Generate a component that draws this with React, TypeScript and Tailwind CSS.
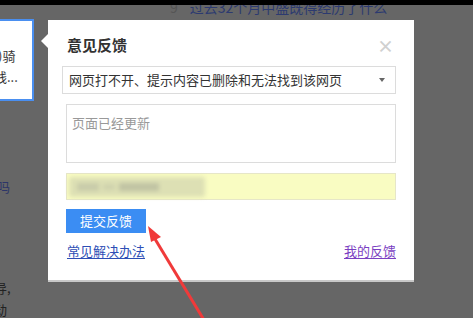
import React from "react";

const cjk = { fontFamily: '"Noto Sans CJK SC", "Noto Sans", sans-serif' };

function FeedbackDialog() {
  return (
    <div className="absolute left-[48px] top-[20px] w-[366px] h-[262px] bg-white border-b-2 border-[#c8c8c8]">
      {/* pointer */}
      <div className="absolute -left-[7px] top-[14px] w-0 h-0 border-y-[7px] border-y-transparent border-r-[7px] border-r-white" />
      <div className="flex items-center justify-between pl-[19px] pr-[20px] pt-[14px] h-[36px]">
        <span className="text-[15px] font-bold text-[#333]">意见反馈</span>
        <span className="text-[17px] leading-none text-[#d0d0d0] font-bold">×</span>
      </div>
      <div className="flex flex-col px-[18px] pt-[10px]">
        <div className="ml-[-4px] w-[334px] h-[28px] border border-[#dcdcdc] flex items-center justify-between pl-[6px] pr-[10px]">
          <span className="text-[13px] text-[#333]">网页打不开、提示内容已删除和无法找到该网页</span>
          <span className="w-0 h-0 border-x-[3.5px] border-x-transparent border-t-[4px] border-t-[#666]" />
        </div>
        <div className="mt-[10px] w-[330px] h-[59px] border border-[#dcdcdc] px-[5px] pt-[4px]">
          <span
            className="text-[13px] text-[#999]"
            style={{ fontFamily: '"Noto Sans CJK SC", serif' }}
          >
            页面已经更新
          </span>
        </div>
        <div className="mt-[10px] w-[330px] h-[27px] bg-[#f9fcc2] border border-[#e6e6c8] flex items-center">
          <div className="ml-[2px] h-[20px] w-[136px] rounded-[3px] bg-[#dde0b4] blur-[2px] flex items-center gap-[4px] px-[8px]">
            <span className="h-[8px] w-[22px] bg-[#c9ccaa]" />
            <span className="h-[6px] w-[12px] bg-[#cfd2ad]" />
            <span className="h-[8px] w-[40px] bg-[#c0c3a3]" />
          </div>
        </div>
        <div className="mt-[9px] w-[80px] h-[24px] bg-[#3b8df3] flex items-center justify-center">
          <span className="text-[13px] text-white">提交反馈</span>
        </div>
        <div className="mt-[8px] flex justify-between w-[330px] pl-px">
          <span className="text-[13px] text-[#2d4eb5] underline underline-offset-2">常见解决办法</span>
          <span className="text-[13px] text-[#7b3fc2] underline underline-offset-2">我的反馈</span>
        </div>
      </div>
    </div>
  );
}

export default function App() {
  return (
    <div className="relative w-[473px] h-[318px] overflow-hidden bg-[#666666]" style={cjk}>
      <div className="absolute left-[170px] top-[-3px] text-[14px] text-[#2c3a70] whitespace-nowrap">
        <span className="text-[#555]">9</span>
        <span className="ml-[12px]">过去32个月中盛既得经历了什么</span>
      </div>
      <div className="relative z-10 h-[5px] bg-black" />
      <div className="mt-[14px] w-[34px] h-[82px] bg-white border-2 border-l-0 border-[#4a8ff0] flex flex-col pt-[27px] gap-[5px] overflow-hidden">
        <span className="text-[13px] leading-[16px] text-[#333] whitespace-nowrap -ml-[2px]">)骑</span>
        <span className="text-[13px] leading-[16px] text-[#333] whitespace-nowrap -ml-[6px]">线...</span>
      </div>
      <div className="mt-[76px] text-[13px] text-[#2c3568] -ml-[3px]">吗</div>
      <div className="mt-[80px] text-[13px] text-[#222] -ml-[6px] leading-[22px]">导,</div>
      <div className="text-[13px] text-[#222] -ml-[6px] leading-[22px]">动</div>
      <FeedbackDialog />
      <svg className="absolute left-0 top-0" width="473" height="318" viewBox="0 0 473 318">
        <line x1="204" y1="320" x2="155" y2="239" stroke="#f03a3a" strokeWidth="3" />
        <polygon points="148,226 161,237 151,242" fill="#f03a3a" />
      </svg>
    </div>
  );
}
